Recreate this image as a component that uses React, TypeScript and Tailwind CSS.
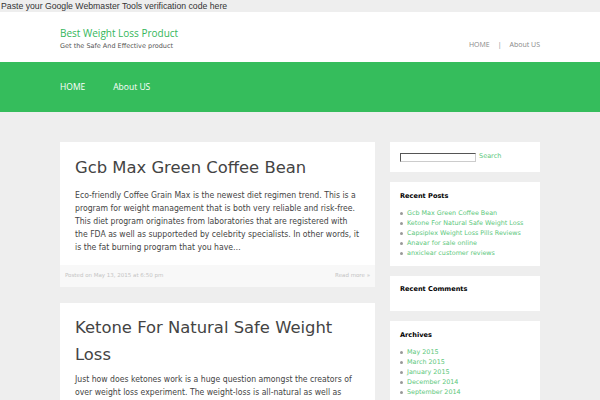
import React from "react";

const recentPosts = [
  "Gcb Max Green Coffee Bean",
  "Ketone For Natural Safe Weight Loss",
  "Capsiplex Weight Loss Pills Reviews",
  "Anavar for sale online",
  "anxiclear customer reviews",
];

const archives = ["May 2015", "March 2015", "January 2015", "December 2014", "September 2014"];

const bodyFont = { fontFamily: '"DejaVu Sans Condensed", "DejaVu Sans", sans-serif' };

function LinkList({ items }: { items: string[] }) {
  return (
    <ul className="text-[6.4px] leading-[10px]">
      {items.map((t) => (
        <li key={t} className="flex items-center gap-[4px] whitespace-nowrap">
          <span className="w-[3px] h-[3px] rounded-full bg-[#999]" />
          <span className="text-[#5cc87c]">{t}</span>
        </li>
      ))}
    </ul>
  );
}

function Widget({ title, children }: { title: string; children?: React.ReactNode }) {
  return (
    <div className="bg-white px-[10px] pt-[9px] pb-[8px]">
      <h3 className="text-[6.6px] font-bold text-black leading-[10px] mb-[7px]">{title}</h3>
      {children}
    </div>
  );
}

export default function App() {
  return (
    <div className="w-[600px] h-[400px] overflow-hidden bg-[#eeeeee]" style={{ fontFamily: '"DejaVu Sans", sans-serif' }}>
      {/* Top bar */}
      <div className="h-[12px] bg-[#eeeeee] text-[8.7px] leading-[12px] text-[#333] pl-[1px]" style={{ fontFamily: '"Liberation Sans", sans-serif' }}>
        Paste your Google Webmaster Tools verification code here
      </div>

      {/* Header */}
      <div className="h-[50px] bg-white flex items-start justify-between pl-[60px] pr-[60px]">
        <div className="pt-[15px]">
          <div className="text-[10px] leading-[12px] text-[#34b65a]" style={{ fontFamily: '"Open Sans", sans-serif' }}>Best Weight Loss Product</div>
          <div className="text-[6.5px] leading-[10px] text-[#555] mt-[2px]">Get the Safe And Effective product</div>
        </div>
        <div className="pt-[28px] flex items-center gap-[8px] text-[7px] text-[#888]" style={{ fontFamily: '"Open Sans", sans-serif' }}>
          <span>HOME</span>
          <span>|</span>
          <span>About US</span>
        </div>
      </div>

      {/* Green nav */}
      <div className="h-[50px] bg-[#35bd5c] flex items-center gap-[28px] pl-[60px] text-[8.5px] text-white" style={{ fontFamily: '"Open Sans", sans-serif' }}>
        <span>HOME</span>
        <span>About US</span>
      </div>

      {/* Body */}
      <div className="flex gap-[15px] pl-[60px] pt-[30px]">
        <div className="w-[315px] flex flex-col gap-[16px]">
          <article className="bg-white">
            <div className="px-[15px] pt-[15px] pb-[11px]">
              <h2 className="text-[16.4px] leading-[22px] text-[#444]">Gcb Max Green Coffee Bean</h2>
              <p className="mt-[9.5px] text-[8.6px] leading-[13px] text-[#444]" style={bodyFont}>
                Eco-friendly Coffee Grain Max is the newest diet regimen trend. This is a program for weight management that is both very reliable and risk-free. This diet program originates from laboratories that are registered with the FDA as well as supporteded by celebrity specialists. In other words, it is the fat burning program that you have…
              </p>
            </div>
            <div className="h-[22px] bg-[#f8f8f8] flex items-center justify-between px-[5px] text-[5.5px] text-[#c4c4c4]">
              <span>Posted on May 13, 2015 at 6:50 pm</span>
              <span>Read more »</span>
            </div>
          </article>
          <article className="bg-white">
            <div className="px-[15px] pt-[11.5px] pb-[16px]">
              <h2 className="text-[16.4px] leading-[27px] text-[#444]">Ketone For Natural Safe Weight Loss</h2>
              <p className="mt-[5px] text-[8.6px] leading-[13px] text-[#444]" style={bodyFont}>
                Just how does ketones work is a huge question amongst the creators of over weight loss experiment. The weight-loss is all-natural as well as
              </p>
            </div>
          </article>
        </div>

        <aside className="w-[150px] flex flex-col gap-[10px]">
          <div className="bg-white h-[30px] flex items-center px-[10px] gap-[3px]">
            <div className="w-[76px] h-[9px] border border-[#555] border-r-[#ccc] border-b-[#ccc]" />
            <span className="text-[6.5px] text-[#5cc87c]">Search</span>
          </div>
          <Widget title="Recent Posts">
            <LinkList items={recentPosts} />
          </Widget>
          <div className="bg-white h-[35px] px-[10px] pt-[8px]">
            <h3 className="text-[6.6px] font-bold text-black leading-[10px]">Recent Comments</h3>
          </div>
          <Widget title="Archives">
            <LinkList items={archives} />
          </Widget>
        </aside>
      </div>
    </div>
  );
}
